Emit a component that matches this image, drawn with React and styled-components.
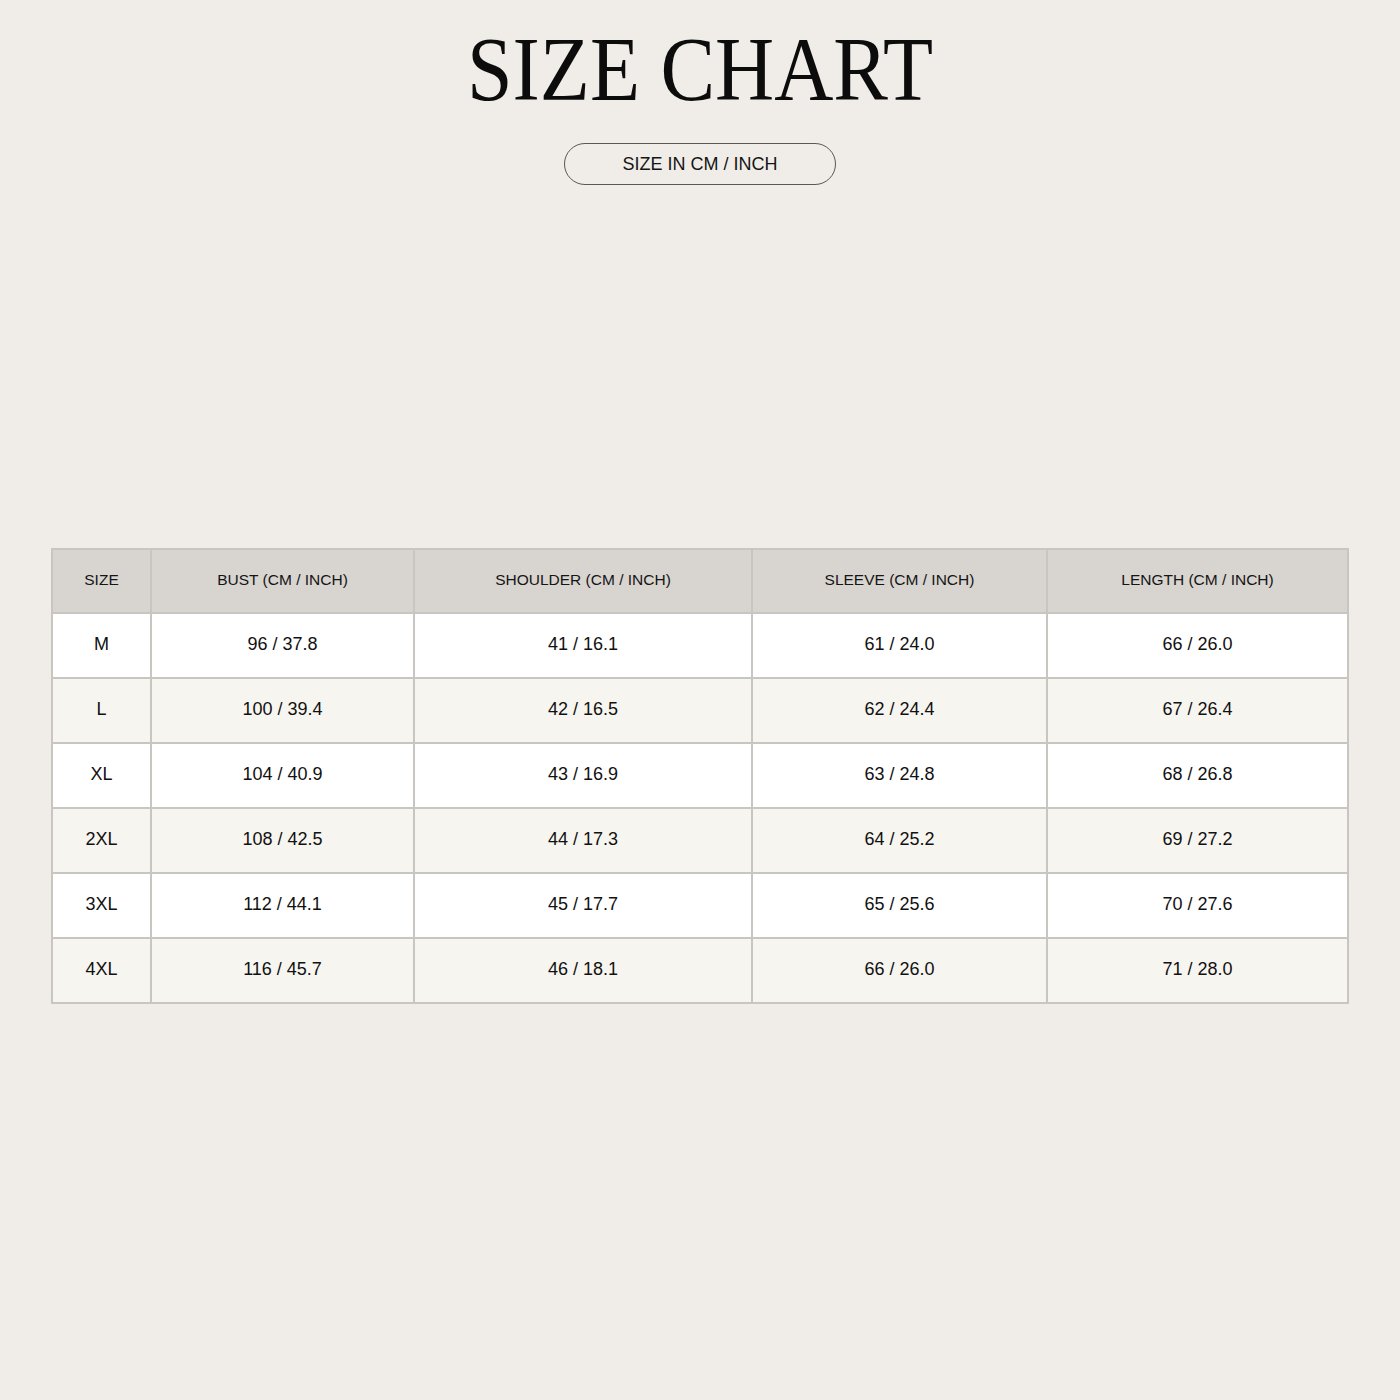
import React from 'react'
import styled, { createGlobalStyle } from 'styled-components'

const GlobalStyle = createGlobalStyle`
  html, body {
    margin: 0;
    padding: 0;
    background: #f0ede8;
  }
  body {
    font-family: "Liberation Sans", Arial, sans-serif;
    color: #111;
  }
`

const Page = styled.div`
  width: 1400px;
  height: 1400px;
  display: flex;
  flex-direction: column;
  align-items: center;
  box-sizing: border-box;
  padding-top: 22px;
`

const Title = styled.h1`
  margin: 0;
  font-family: "Liberation Serif", "Times New Roman", serif;
  font-weight: 400;
  font-size: 90px;
  line-height: 96px;
  letter-spacing: 0;
  transform: scaleX(0.91);
  color: #0c0c0c;
`

const Pill = styled.div`
  margin-top: 25px;
  width: 272px;
  height: 42px;
  box-sizing: border-box;
  border: 1px solid #5a5856;
  border-radius: 21px;
  display: flex;
  align-items: center;
  justify-content: center;
  font-size: 18px;
  color: #151515;
`

const Table = styled.table`
  margin-top: 363px;
  width: 1296px;
  table-layout: fixed;
  border-collapse: collapse;
  border: 2px solid #c9c6c1;
`

const HeadCell = styled.th`
  height: 60px;
  padding: 0 0 2px;
  background: #d8d4d0;
  border: 2px solid #c9c6c1;
  font-weight: 400;
  font-size: 15.5px;
  color: #151515;
  text-align: center;
`

const Row = styled.tr`
  background: ${(p) => (p.shaded ? '#f7f5f0' : '#ffffff')};
`

const Cell = styled.td`
  height: 61px;
  padding: 0 0 2px;
  border: 2px solid #c9c6c1;
  font-size: 18px;
  color: #111;
  text-align: center;
`

const columns = [
  { label: 'SIZE', width: 99 },
  { label: 'BUST (CM / INCH)', width: 263 },
  { label: 'SHOULDER (CM / INCH)', width: 338 },
  { label: 'SLEEVE (CM / INCH)', width: 295 },
  { label: 'LENGTH (CM / INCH)', width: 301 }
]

const rows = [
  ['M', '96 / 37.8', '41 / 16.1', '61 / 24.0', '66 / 26.0'],
  ['L', '100 / 39.4', '42 / 16.5', '62 / 24.4', '67 / 26.4'],
  ['XL', '104 / 40.9', '43 / 16.9', '63 / 24.8', '68 / 26.8'],
  ['2XL', '108 / 42.5', '44 / 17.3', '64 / 25.2', '69 / 27.2'],
  ['3XL', '112 / 44.1', '45 / 17.7', '65 / 25.6', '70 / 27.6'],
  ['4XL', '116 / 45.7', '46 / 18.1', '66 / 26.0', '71 / 28.0']
]

export default function App() {
  return (
    <>
      <GlobalStyle />
      <Page>
        <Title>SIZE CHART</Title>
        <Pill>SIZE IN CM / INCH</Pill>
        <Table>
          <colgroup>
            {columns.map((c) => (
              <col key={c.label} style={{ width: c.width }} />
            ))}
          </colgroup>
          <thead>
            <tr>
              {columns.map((c) => (
                <HeadCell key={c.label}>{c.label}</HeadCell>
              ))}
            </tr>
          </thead>
          <tbody>
            {rows.map((r, i) => (
              <Row key={r[0]} shaded={i % 2 === 1}>
                {r.map((v, j) => (
                  <Cell key={j}>{v}</Cell>
                ))}
              </Row>
            ))}
          </tbody>
        </Table>
      </Page>
    </>
  )
}
